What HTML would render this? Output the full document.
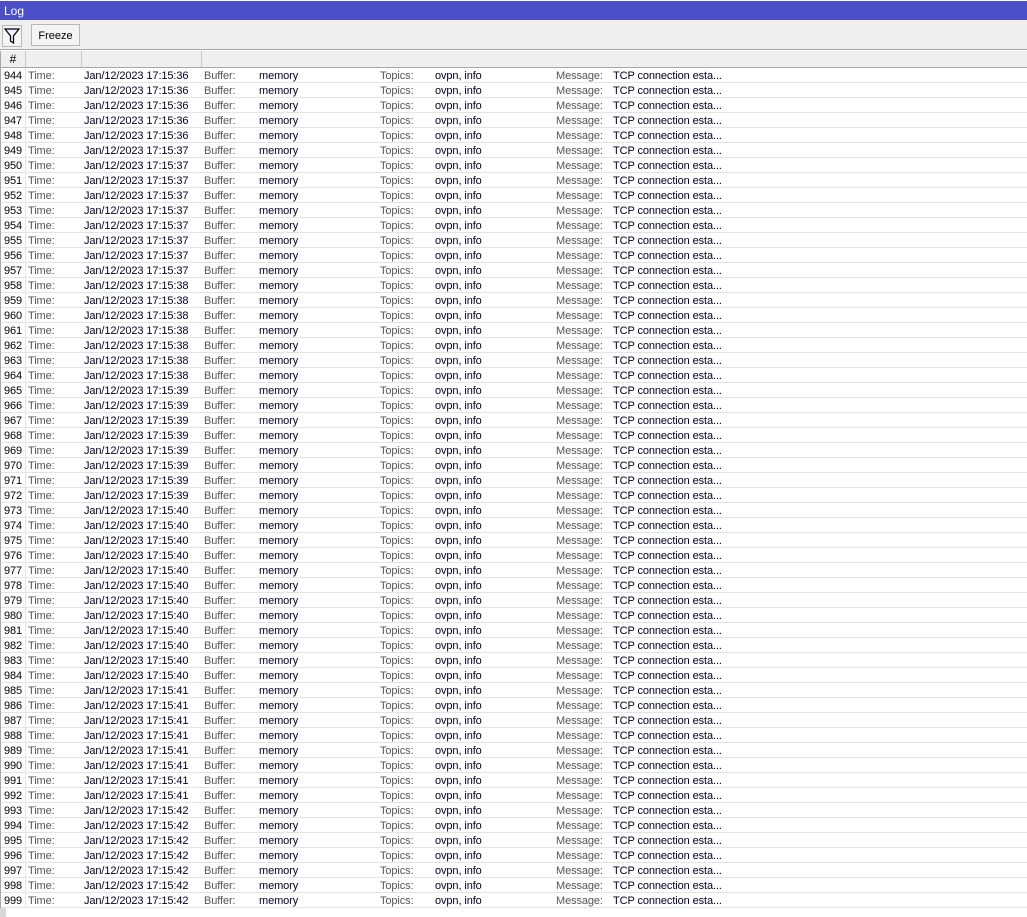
<!DOCTYPE html>
<html><head><meta charset="utf-8"><style>
*{margin:0;padding:0;box-sizing:border-box}
body{width:1027px;height:917px;background:#fff;font-family:"Liberation Sans",Arial,sans-serif;font-size:11px;position:relative;overflow:hidden}
.t{position:absolute;left:0;top:0;width:1027px;height:20px;background:#4b50c8;color:#fff;font-size:12px;padding:3px 0 0 4px;border-top:1px solid #fff}
.tb{position:absolute;left:0;top:20px;width:1027px;height:30px;background:#efefef;border-bottom:1px solid #a8a8a8}
.f{position:absolute;left:2px;top:5px;width:20px;height:22px;border:1px solid #b8b8b8;background:#f4f4f4}
.fz{position:absolute;left:31px;top:4px;width:49px;height:22px;border:1px solid #b8b8b8;background:#f4f4f4;text-align:center;line-height:23px;font-size:11px;color:#000}
.h{position:absolute;left:0;top:51px;width:1027px;height:17px;background:#efefef;border-bottom:1px solid #a8a8a8}
.h div{position:absolute;top:0;height:16px;border-right:1px solid #c8c8c8}
.rows{position:absolute;left:0;top:68px;width:1027px}
.r{position:relative;height:15px;border-bottom:1px solid #e4e4e4;line-height:16px;letter-spacing:-0.1px}
.r span{position:absolute;top:0;white-space:nowrap}
.r span:nth-child(1){left:0;width:26px;text-align:center;color:#000;border-left:1px solid #a8a8a8;border-right:1px solid #e4e4e4;height:15px}
.r span:nth-child(2){left:28px;color:#555}
.r span:nth-child(3){left:84px;color:#000022}
.r span:nth-child(4){left:204px;color:#555}
.r span:nth-child(5){left:259px;color:#000022}
.r span:nth-child(6){left:380px;color:#555}
.r span:nth-child(7){left:435px;color:#000022}
.r span:nth-child(8){left:556px;color:#555}
.r span:nth-child(9){left:613px;color:#000022}
.sb{position:absolute;left:0;top:908px;width:6px;height:9px;background:#d8d8d8}
</style></head><body>
<div class="t">Log</div>
<div class="tb"><div class="f"><svg width="18" height="20" viewBox="0 0 18 20"><path d="M2 3H16L10.5 10V17L7.5 15V10Z" fill="#eef" stroke="#000" stroke-width="1.2"/></svg></div><div class="fz">Freeze</div></div>
<div class="h"><div style="left:0;width:26px;border-left:1px solid #a8a8a8;text-align:center;font-size:12px;line-height:16px">#</div><div style="left:26px;width:56px"></div><div style="left:82px;width:120px"></div></div>
<div class="rows">
<div class="r"><span>944</span><span>Time:</span><span>Jan/12/2023 17:15:36</span><span>Buffer:</span><span>memory</span><span>Topics:</span><span>ovpn, info</span><span>Message:</span><span>TCP connection esta...</span></div>
<div class="r"><span>945</span><span>Time:</span><span>Jan/12/2023 17:15:36</span><span>Buffer:</span><span>memory</span><span>Topics:</span><span>ovpn, info</span><span>Message:</span><span>TCP connection esta...</span></div>
<div class="r"><span>946</span><span>Time:</span><span>Jan/12/2023 17:15:36</span><span>Buffer:</span><span>memory</span><span>Topics:</span><span>ovpn, info</span><span>Message:</span><span>TCP connection esta...</span></div>
<div class="r"><span>947</span><span>Time:</span><span>Jan/12/2023 17:15:36</span><span>Buffer:</span><span>memory</span><span>Topics:</span><span>ovpn, info</span><span>Message:</span><span>TCP connection esta...</span></div>
<div class="r"><span>948</span><span>Time:</span><span>Jan/12/2023 17:15:36</span><span>Buffer:</span><span>memory</span><span>Topics:</span><span>ovpn, info</span><span>Message:</span><span>TCP connection esta...</span></div>
<div class="r"><span>949</span><span>Time:</span><span>Jan/12/2023 17:15:37</span><span>Buffer:</span><span>memory</span><span>Topics:</span><span>ovpn, info</span><span>Message:</span><span>TCP connection esta...</span></div>
<div class="r"><span>950</span><span>Time:</span><span>Jan/12/2023 17:15:37</span><span>Buffer:</span><span>memory</span><span>Topics:</span><span>ovpn, info</span><span>Message:</span><span>TCP connection esta...</span></div>
<div class="r"><span>951</span><span>Time:</span><span>Jan/12/2023 17:15:37</span><span>Buffer:</span><span>memory</span><span>Topics:</span><span>ovpn, info</span><span>Message:</span><span>TCP connection esta...</span></div>
<div class="r"><span>952</span><span>Time:</span><span>Jan/12/2023 17:15:37</span><span>Buffer:</span><span>memory</span><span>Topics:</span><span>ovpn, info</span><span>Message:</span><span>TCP connection esta...</span></div>
<div class="r"><span>953</span><span>Time:</span><span>Jan/12/2023 17:15:37</span><span>Buffer:</span><span>memory</span><span>Topics:</span><span>ovpn, info</span><span>Message:</span><span>TCP connection esta...</span></div>
<div class="r"><span>954</span><span>Time:</span><span>Jan/12/2023 17:15:37</span><span>Buffer:</span><span>memory</span><span>Topics:</span><span>ovpn, info</span><span>Message:</span><span>TCP connection esta...</span></div>
<div class="r"><span>955</span><span>Time:</span><span>Jan/12/2023 17:15:37</span><span>Buffer:</span><span>memory</span><span>Topics:</span><span>ovpn, info</span><span>Message:</span><span>TCP connection esta...</span></div>
<div class="r"><span>956</span><span>Time:</span><span>Jan/12/2023 17:15:37</span><span>Buffer:</span><span>memory</span><span>Topics:</span><span>ovpn, info</span><span>Message:</span><span>TCP connection esta...</span></div>
<div class="r"><span>957</span><span>Time:</span><span>Jan/12/2023 17:15:37</span><span>Buffer:</span><span>memory</span><span>Topics:</span><span>ovpn, info</span><span>Message:</span><span>TCP connection esta...</span></div>
<div class="r"><span>958</span><span>Time:</span><span>Jan/12/2023 17:15:38</span><span>Buffer:</span><span>memory</span><span>Topics:</span><span>ovpn, info</span><span>Message:</span><span>TCP connection esta...</span></div>
<div class="r"><span>959</span><span>Time:</span><span>Jan/12/2023 17:15:38</span><span>Buffer:</span><span>memory</span><span>Topics:</span><span>ovpn, info</span><span>Message:</span><span>TCP connection esta...</span></div>
<div class="r"><span>960</span><span>Time:</span><span>Jan/12/2023 17:15:38</span><span>Buffer:</span><span>memory</span><span>Topics:</span><span>ovpn, info</span><span>Message:</span><span>TCP connection esta...</span></div>
<div class="r"><span>961</span><span>Time:</span><span>Jan/12/2023 17:15:38</span><span>Buffer:</span><span>memory</span><span>Topics:</span><span>ovpn, info</span><span>Message:</span><span>TCP connection esta...</span></div>
<div class="r"><span>962</span><span>Time:</span><span>Jan/12/2023 17:15:38</span><span>Buffer:</span><span>memory</span><span>Topics:</span><span>ovpn, info</span><span>Message:</span><span>TCP connection esta...</span></div>
<div class="r"><span>963</span><span>Time:</span><span>Jan/12/2023 17:15:38</span><span>Buffer:</span><span>memory</span><span>Topics:</span><span>ovpn, info</span><span>Message:</span><span>TCP connection esta...</span></div>
<div class="r"><span>964</span><span>Time:</span><span>Jan/12/2023 17:15:38</span><span>Buffer:</span><span>memory</span><span>Topics:</span><span>ovpn, info</span><span>Message:</span><span>TCP connection esta...</span></div>
<div class="r"><span>965</span><span>Time:</span><span>Jan/12/2023 17:15:39</span><span>Buffer:</span><span>memory</span><span>Topics:</span><span>ovpn, info</span><span>Message:</span><span>TCP connection esta...</span></div>
<div class="r"><span>966</span><span>Time:</span><span>Jan/12/2023 17:15:39</span><span>Buffer:</span><span>memory</span><span>Topics:</span><span>ovpn, info</span><span>Message:</span><span>TCP connection esta...</span></div>
<div class="r"><span>967</span><span>Time:</span><span>Jan/12/2023 17:15:39</span><span>Buffer:</span><span>memory</span><span>Topics:</span><span>ovpn, info</span><span>Message:</span><span>TCP connection esta...</span></div>
<div class="r"><span>968</span><span>Time:</span><span>Jan/12/2023 17:15:39</span><span>Buffer:</span><span>memory</span><span>Topics:</span><span>ovpn, info</span><span>Message:</span><span>TCP connection esta...</span></div>
<div class="r"><span>969</span><span>Time:</span><span>Jan/12/2023 17:15:39</span><span>Buffer:</span><span>memory</span><span>Topics:</span><span>ovpn, info</span><span>Message:</span><span>TCP connection esta...</span></div>
<div class="r"><span>970</span><span>Time:</span><span>Jan/12/2023 17:15:39</span><span>Buffer:</span><span>memory</span><span>Topics:</span><span>ovpn, info</span><span>Message:</span><span>TCP connection esta...</span></div>
<div class="r"><span>971</span><span>Time:</span><span>Jan/12/2023 17:15:39</span><span>Buffer:</span><span>memory</span><span>Topics:</span><span>ovpn, info</span><span>Message:</span><span>TCP connection esta...</span></div>
<div class="r"><span>972</span><span>Time:</span><span>Jan/12/2023 17:15:39</span><span>Buffer:</span><span>memory</span><span>Topics:</span><span>ovpn, info</span><span>Message:</span><span>TCP connection esta...</span></div>
<div class="r"><span>973</span><span>Time:</span><span>Jan/12/2023 17:15:40</span><span>Buffer:</span><span>memory</span><span>Topics:</span><span>ovpn, info</span><span>Message:</span><span>TCP connection esta...</span></div>
<div class="r"><span>974</span><span>Time:</span><span>Jan/12/2023 17:15:40</span><span>Buffer:</span><span>memory</span><span>Topics:</span><span>ovpn, info</span><span>Message:</span><span>TCP connection esta...</span></div>
<div class="r"><span>975</span><span>Time:</span><span>Jan/12/2023 17:15:40</span><span>Buffer:</span><span>memory</span><span>Topics:</span><span>ovpn, info</span><span>Message:</span><span>TCP connection esta...</span></div>
<div class="r"><span>976</span><span>Time:</span><span>Jan/12/2023 17:15:40</span><span>Buffer:</span><span>memory</span><span>Topics:</span><span>ovpn, info</span><span>Message:</span><span>TCP connection esta...</span></div>
<div class="r"><span>977</span><span>Time:</span><span>Jan/12/2023 17:15:40</span><span>Buffer:</span><span>memory</span><span>Topics:</span><span>ovpn, info</span><span>Message:</span><span>TCP connection esta...</span></div>
<div class="r"><span>978</span><span>Time:</span><span>Jan/12/2023 17:15:40</span><span>Buffer:</span><span>memory</span><span>Topics:</span><span>ovpn, info</span><span>Message:</span><span>TCP connection esta...</span></div>
<div class="r"><span>979</span><span>Time:</span><span>Jan/12/2023 17:15:40</span><span>Buffer:</span><span>memory</span><span>Topics:</span><span>ovpn, info</span><span>Message:</span><span>TCP connection esta...</span></div>
<div class="r"><span>980</span><span>Time:</span><span>Jan/12/2023 17:15:40</span><span>Buffer:</span><span>memory</span><span>Topics:</span><span>ovpn, info</span><span>Message:</span><span>TCP connection esta...</span></div>
<div class="r"><span>981</span><span>Time:</span><span>Jan/12/2023 17:15:40</span><span>Buffer:</span><span>memory</span><span>Topics:</span><span>ovpn, info</span><span>Message:</span><span>TCP connection esta...</span></div>
<div class="r"><span>982</span><span>Time:</span><span>Jan/12/2023 17:15:40</span><span>Buffer:</span><span>memory</span><span>Topics:</span><span>ovpn, info</span><span>Message:</span><span>TCP connection esta...</span></div>
<div class="r"><span>983</span><span>Time:</span><span>Jan/12/2023 17:15:40</span><span>Buffer:</span><span>memory</span><span>Topics:</span><span>ovpn, info</span><span>Message:</span><span>TCP connection esta...</span></div>
<div class="r"><span>984</span><span>Time:</span><span>Jan/12/2023 17:15:40</span><span>Buffer:</span><span>memory</span><span>Topics:</span><span>ovpn, info</span><span>Message:</span><span>TCP connection esta...</span></div>
<div class="r"><span>985</span><span>Time:</span><span>Jan/12/2023 17:15:41</span><span>Buffer:</span><span>memory</span><span>Topics:</span><span>ovpn, info</span><span>Message:</span><span>TCP connection esta...</span></div>
<div class="r"><span>986</span><span>Time:</span><span>Jan/12/2023 17:15:41</span><span>Buffer:</span><span>memory</span><span>Topics:</span><span>ovpn, info</span><span>Message:</span><span>TCP connection esta...</span></div>
<div class="r"><span>987</span><span>Time:</span><span>Jan/12/2023 17:15:41</span><span>Buffer:</span><span>memory</span><span>Topics:</span><span>ovpn, info</span><span>Message:</span><span>TCP connection esta...</span></div>
<div class="r"><span>988</span><span>Time:</span><span>Jan/12/2023 17:15:41</span><span>Buffer:</span><span>memory</span><span>Topics:</span><span>ovpn, info</span><span>Message:</span><span>TCP connection esta...</span></div>
<div class="r"><span>989</span><span>Time:</span><span>Jan/12/2023 17:15:41</span><span>Buffer:</span><span>memory</span><span>Topics:</span><span>ovpn, info</span><span>Message:</span><span>TCP connection esta...</span></div>
<div class="r"><span>990</span><span>Time:</span><span>Jan/12/2023 17:15:41</span><span>Buffer:</span><span>memory</span><span>Topics:</span><span>ovpn, info</span><span>Message:</span><span>TCP connection esta...</span></div>
<div class="r"><span>991</span><span>Time:</span><span>Jan/12/2023 17:15:41</span><span>Buffer:</span><span>memory</span><span>Topics:</span><span>ovpn, info</span><span>Message:</span><span>TCP connection esta...</span></div>
<div class="r"><span>992</span><span>Time:</span><span>Jan/12/2023 17:15:41</span><span>Buffer:</span><span>memory</span><span>Topics:</span><span>ovpn, info</span><span>Message:</span><span>TCP connection esta...</span></div>
<div class="r"><span>993</span><span>Time:</span><span>Jan/12/2023 17:15:42</span><span>Buffer:</span><span>memory</span><span>Topics:</span><span>ovpn, info</span><span>Message:</span><span>TCP connection esta...</span></div>
<div class="r"><span>994</span><span>Time:</span><span>Jan/12/2023 17:15:42</span><span>Buffer:</span><span>memory</span><span>Topics:</span><span>ovpn, info</span><span>Message:</span><span>TCP connection esta...</span></div>
<div class="r"><span>995</span><span>Time:</span><span>Jan/12/2023 17:15:42</span><span>Buffer:</span><span>memory</span><span>Topics:</span><span>ovpn, info</span><span>Message:</span><span>TCP connection esta...</span></div>
<div class="r"><span>996</span><span>Time:</span><span>Jan/12/2023 17:15:42</span><span>Buffer:</span><span>memory</span><span>Topics:</span><span>ovpn, info</span><span>Message:</span><span>TCP connection esta...</span></div>
<div class="r"><span>997</span><span>Time:</span><span>Jan/12/2023 17:15:42</span><span>Buffer:</span><span>memory</span><span>Topics:</span><span>ovpn, info</span><span>Message:</span><span>TCP connection esta...</span></div>
<div class="r"><span>998</span><span>Time:</span><span>Jan/12/2023 17:15:42</span><span>Buffer:</span><span>memory</span><span>Topics:</span><span>ovpn, info</span><span>Message:</span><span>TCP connection esta...</span></div>
<div class="r"><span>999</span><span>Time:</span><span>Jan/12/2023 17:15:42</span><span>Buffer:</span><span>memory</span><span>Topics:</span><span>ovpn, info</span><span>Message:</span><span>TCP connection esta...</span></div>
</div>
<div class="sb"></div>
</body></html>
